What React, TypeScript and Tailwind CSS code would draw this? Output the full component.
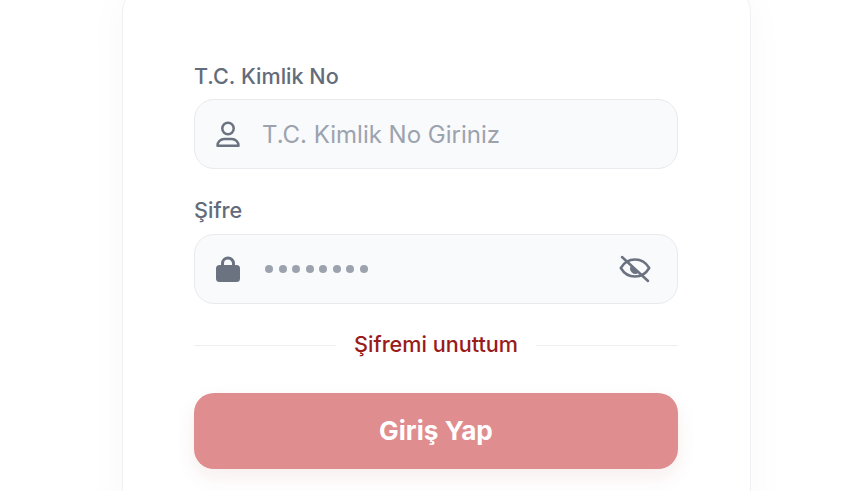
import React from "react";

export default function App() {
  return (
    <div className="w-[856px] h-[491px] overflow-hidden bg-white font-['Inter',sans-serif]">
      <div className="mt-[-16px] ml-[122px] w-[629px] h-[600px] bg-white rounded-[28px] border border-[#eff0f3] shadow-[0_6px_44px_rgba(0,0,0,0.03)] px-[71px] pt-[77px]">
        <label className="block text-[21.6px] leading-[28px] font-medium text-[#636c7a] mb-[9px]">T.C. Kimlik No</label>
        <div className="flex items-center h-[70px] w-[484px] rounded-[20px] border border-[#e8eaed] bg-[#f9fafb] pl-[19px] pr-[26px]">
          <svg width="28" height="28" viewBox="0 0 28 28" fill="none" stroke="#6b7280" strokeWidth="2.500" strokeLinecap="round" strokeLinejoin="round" className="shrink-0">
            <circle cx="14" cy="8.500" r="5.700" />
            <path d="M3.500 25.800c0-4 3-6.900 6.800-6.900h7.400c3.800 0 6.800 2.900 6.800 6.900z" />
          </svg>
          <span className="ml-[20px] pt-[2px] text-[24px] text-[#9ca3af]">T.C. Kimlik No Giriniz</span>
        </div>
        <label className="block mt-[27px] text-[21.6px] leading-[28px] font-medium text-[#636c7a] mb-[10px]">Şifre</label>
        <div className="flex items-center h-[70px] w-[484px] rounded-[20px] border border-[#e8eaed] bg-[#f9fafb] pl-[19px] pr-[26px]">
          <svg width="28" height="28" viewBox="0 0 28 28" className="shrink-0">
            <rect x="2" y="10" width="24" height="17" rx="3.500" fill="#6b7280" />
            <path d="M8.500 12V8.500a5.500 5.500 0 0 1 11 0V12" fill="none" stroke="#6b7280" strokeWidth="3" />
          </svg>
          <div className="ml-[23px] flex gap-[5.500px]">
            {[0, 1, 2, 3, 4, 5, 6, 7].map((i) => (
              <span key={i} className="w-[8px] h-[8px] rounded-full bg-[#9ca3af]" />
            ))}
          </div>
          <svg width="32" height="32" viewBox="0 0 32 32" fill="none" stroke="#6b7280" strokeWidth="2.500" strokeLinecap="round" strokeLinejoin="round" className="ml-auto shrink-0">
            <path d="M1.800 15C5 9.500 10 6.500 16 6.500S27 9.500 30.200 15C27 20.500 22 23.500 16 23.500S5 20.500 1.800 15z" />
            <path d="M12.350 12.600A5 5 0 0 0 19.650 19.400z" fill="#6b7280" stroke="none" />
            <path d="M3 4l26 24" />
          </svg>
        </div>
        <div className="flex items-center mt-[26px] h-[30px] w-[484px]">
          <div className="flex-1 h-px bg-[#eceef1]" />
          <span className="px-[18px] pb-[2px] text-[21.6px] font-medium text-[#991b1b]">Şifremi unuttum</span>
          <div className="flex-1 h-px bg-[#eceef1]" />
        </div>
        <button className="mt-[33px] block w-[484px] h-[76px] rounded-[20px] bg-[#df8d8f] text-white text-[26.200px] font-bold shadow-[0_8px_20px_rgba(153,27,27,0.08)]">Giriş Yap</button>
      </div>
    </div>
  );
}
